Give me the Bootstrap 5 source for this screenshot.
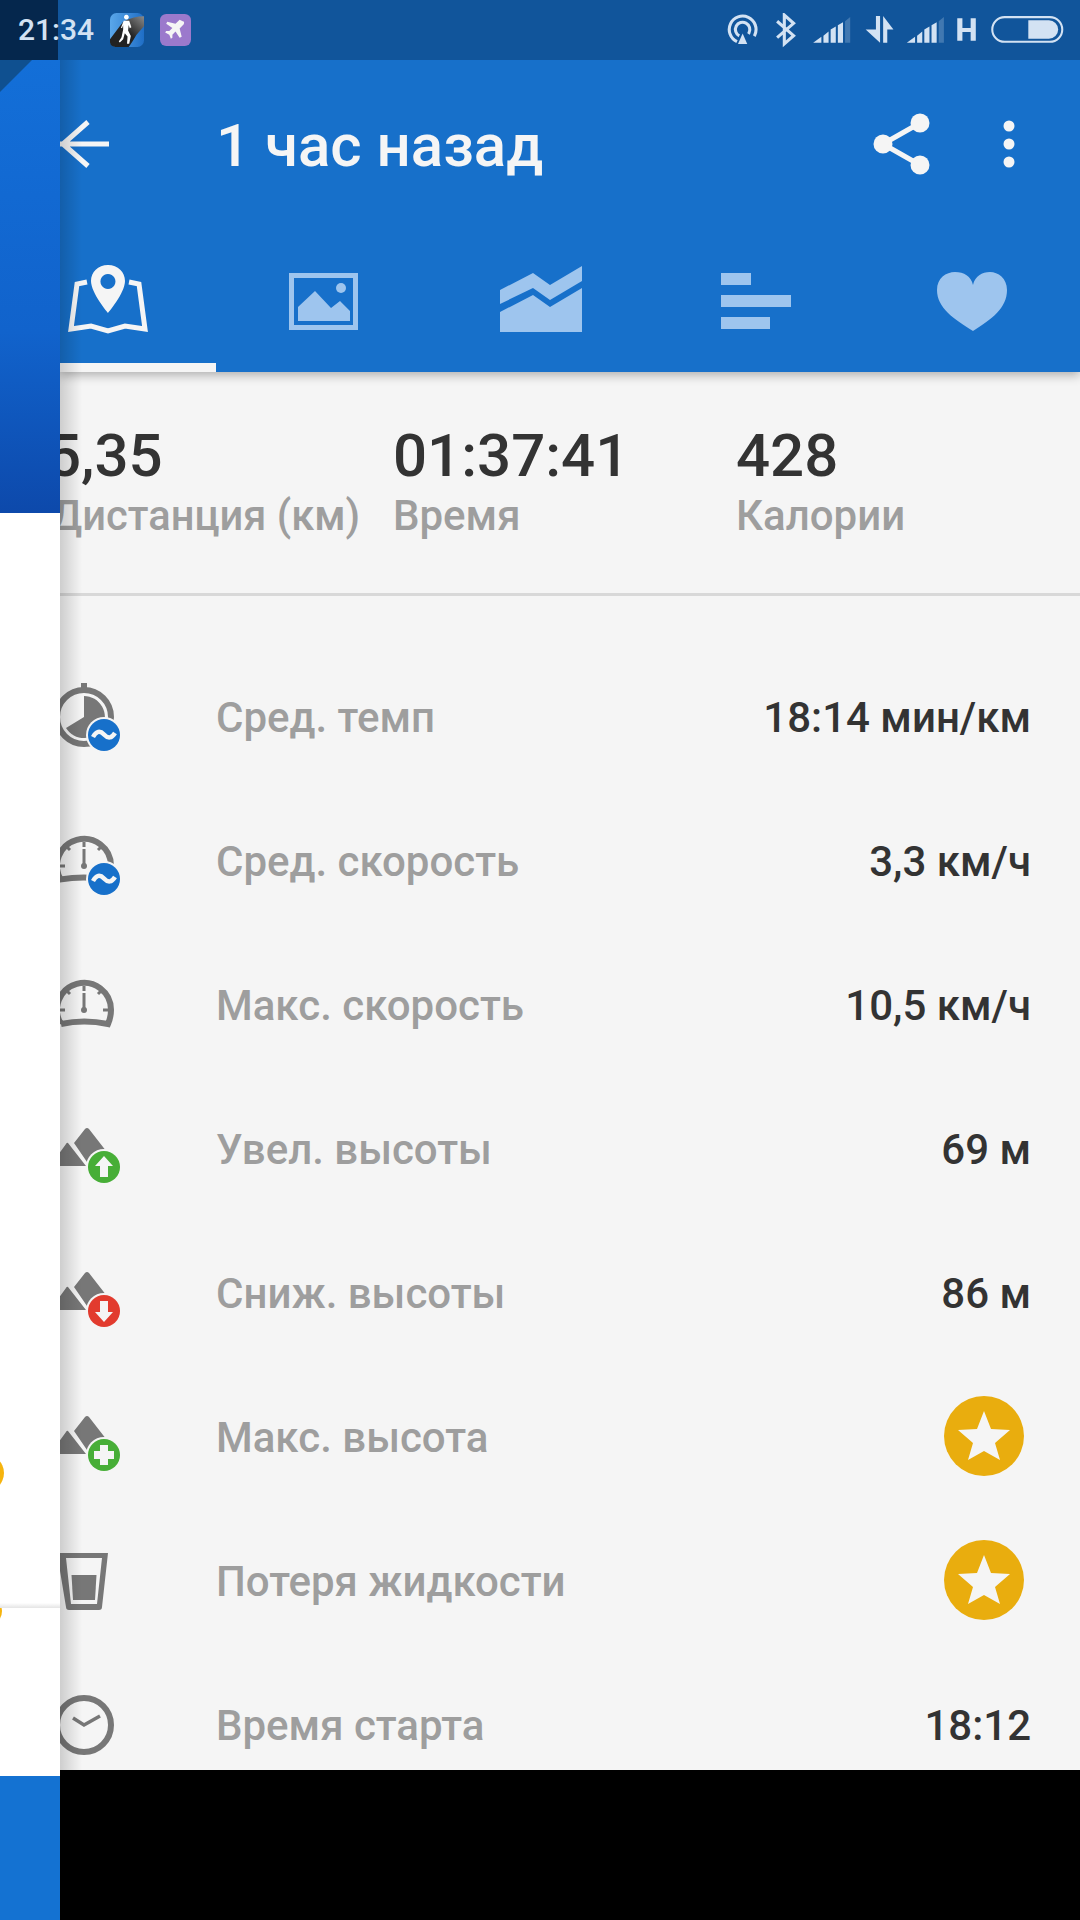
<!DOCTYPE html>
<html lang="ru">
<head>
    <meta charset="UTF-8">
    <meta name="viewport" content="width=device-width, initial-scale=1.0">
    <title>1 час назад</title>
    <link rel="stylesheet" href="https://cdn.jsdelivr.net/npm/bootstrap@5.3.0/dist/css/bootstrap.min.css">
    <script src="https://cdn.jsdelivr.net/npm/bootstrap@5.3.0/dist/js/bootstrap.bundle.min.js"></script>
    <style>
        html, body { background: #000; }
        body { width: 1080px; height: 1920px; overflow: hidden; font-family: Roboto, "Noto Sans", sans-serif; }
        svg { display: block; flex: none; }

        .status-bar { height: 60px; padding: 0 16px 0 18px; background: linear-gradient(90deg, #05274d 58px, #11559b 58px); color: #d3e2f3; }
        .status-time { width: 92px; font-size: 30px; font-weight: 500; line-height: 1; }

        .side-strip { width: 60px; height: 1860px; }
        .side-blue { height: 453px; background: linear-gradient(180deg, #136fd8 0%, #1163cc 60%, #0d49ab 100%); }
        .side-white { height: 1263px; background: #fff; }
        .side-blue-low { height: 144px; background: #1472d2; }
        .gold-edge { width: 45px; height: 40px; top: 940px; left: -41px; background: #f6b40e; }
        .gold-edge-low { width: 30px; height: 30px; top: 1083px; left: -28px; background: #f6b40e; }
        .side-line { top: 1543px; height: 5px; background: linear-gradient(180deg, #fff, #e4e4e4); }

        .main-panel { width: 1020px; height: 1710px; background: #f5f5f5; }
        .main-panel::after { content: ""; position: absolute; top: 0; bottom: 0; left: 0; width: 22px; background: linear-gradient(90deg, rgba(0,0,0,.16), rgba(0,0,0,0)); pointer-events: none; }

        .app-header { height: 312px; background: #1770ca; box-shadow: 0 3px 10px rgba(0,0,0,.3); }
        .tool-row { height: 168px; padding-right: 65px; }
        .tool-title { font-size: 60px; font-weight: 500; color: #f5f5f5; margin-left: 106px; margin-top: 4px; line-height: 1; }
        .menu-dots { margin-left: 72px; }
        .tab-row { height: 144px; margin-left: -60px; width: 1080px; }
        .tab-cell { height: 144px; }
        .tab-svg { margin-top: 33px; }
        .tab-mark { left: 60px; bottom: 0; width: 156px; height: 9px; background: #f5f5f5; }

        .stat-row { margin-left: -7px; height: 221px; padding-top: 48px; }
        .stat-box { width: 340px; }
        .stat-box:nth-child(2) { width: 343px; }
        .stat-value { font-size: 60px; font-weight: 500; line-height: 72px; color: #333; }
        .stat-shift { margin-left: -6px; }
        .stat-label { font-size: 42px; font-weight: 500; line-height: 48px; color: #9e9e9e; white-space: nowrap; }
        .stat-label-first { margin-left: -2px; font-size: 41.700px; }
        .stat-rule { height: 3px; background: #d8d8d8; }

        .info-list { padding-top: 50px; }
        .info-row { height: 144px; padding-right: 49px; }
        .info-icon { margin-left: -20px; margin-right: 88px; }
        .info-label { font-size: 42px; font-weight: 500; color: #9e9e9e; margin-bottom: 2px; }
        .info-value { font-size: 42px; font-weight: 500; color: #333; margin-bottom: 2px; }
        .star-mark { margin-right: 7px; margin-bottom: 4px; }
    </style>
</head>
<body>
    <!-- status bar -->
    <div class="status-bar d-flex align-items-center justify-content-between">
        <div class="d-flex align-items-center">
            <span class="status-time">21:34</span>
            <svg width="34" height="34" viewBox="0 0 31 31">
                <defs>
                    <linearGradient id="runBg" x1="0" y1="0" x2="1" y2="0"><stop offset="0" stop-color="#5aa7ea"/><stop offset="1" stop-color="#1f6ec6"/></linearGradient>
                    <linearGradient id="runBand" x1="0" y1="1" x2="1" y2="0"><stop offset=".5" stop-color="#222"/><stop offset="1" stop-color="#8a8a8a"/></linearGradient>
                </defs>
                <rect width="31" height="31" rx="6" fill="url(#runBg)"/>
                <path d="M0 24 L12 8 Q22 3 31 3 L31 12 L24 20 Q20 27 17 31 H5 Q1 31 0 27Z" fill="url(#runBand)"/>
                <path d="M15 1.500 a2.200 2.200 0 1 1 -.1 0Z M12.500 7 L17.500 7 L19.500 13 L18 14 L17 11 L16.500 16 L19 21 L17.500 28 L15.500 28 L16 21.500 L13.500 18.500 L12 24 L9 27 L8 26 L10.500 22 L12 15 L12 11 L11 14 L10 13.500Z" fill="#fff"/>
            </svg>
            <svg class="ms-3" width="31" height="34" viewBox="0 0 30 31">
                <rect width="30" height="31" rx="6" fill="#9b79cc"/>
                <path d="M22 7 q2 0 1 3 l-4 4 2 8 -2 1 -4 -6 -3 3 v3 l-1.500 1 -1.500 -4 -4 -2 1 -1.500 h3 l3 -3 -6 -4 1 -2 8 2 4 -4z" fill="#f5f5f5"/>
            </svg>
        </div>
        <div class="d-flex align-items-center">
            <svg width="337" height="35" viewBox="722 14 326 34" fill="#d3e2f3">
                <!-- hotspot -->
                <circle cx="736.500" cy="30" r="13" fill="none" stroke="#d3e2f3" stroke-width="3" stroke-dasharray="62 20" transform="rotate(115 736.500 30)"/>
                <circle cx="736.500" cy="30" r="7" fill="none" stroke="#d3e2f3" stroke-width="3" stroke-dasharray="34 10" transform="rotate(118 736.500 30)"/>
                <path d="M736.500 34 L741 44 H732Z"/>
                <!-- bluetooth -->
                <path d="M770 22 L786 36 L777 44 V16 L786 24 L770 38" fill="none" stroke="#d3e2f3" stroke-width="3"/>
                <!-- signal 1 -->
                <path d="M805 43 L813 37 V43Z M815 36 L820 32 V43 H815Z M822 30 L827 27 V43 H822Z M829 26 L834 23 V43 H829Z"/>
                <path d="M836 22 L841 18 V43 H836Z" opacity=".25"/>
                <!-- data arrows -->
                <path d="M866 17 H870 V43 L856 30 H866Z M873 43 V17 L883 30 H877 V43Z"/>
                <!-- signal 2 -->
                <path d="M896 43 L904 37 V43Z M906 36 L911 32 V43 H906Z M913 30 L918 27 V43 H913Z M920 26 L925 23 V43 H920Z"/>
                <path d="M927 22 L932 18 V43 H927Z" opacity=".25"/>
                <!-- H as network type -->
                <path d="M945 19 H950 V28.500 H958 V19 H963 V41 H958 V32.500 H950 V41 H945Z"/>
                <!-- battery -->
                <rect x="979" y="18" width="68" height="24" rx="12" fill="none" stroke="#d3e2f3" stroke-width="2"/>
                <path d="M1014 21 H1034 a9 9 0 0 1 0 18 H1014Z"/>
            </svg>
        </div>
    </div>

    <div class="d-flex align-items-start">
        <!-- window behind the panel -->
        <div class="side-strip position-relative overflow-hidden flex-shrink-0">
            <div class="side-blue position-relative">
                <svg class="position-absolute top-0 start-0" width="32" height="32" viewBox="0 0 32 32"><path d="M0 0 H32 L0 32Z" fill="#0f5090"/></svg>
            </div>
            <div class="side-white position-relative">
                <div class="gold-edge position-absolute rounded-circle"></div>
                <div class="gold-edge-low position-absolute rounded-circle"></div>
            </div>
            <div class="side-line position-absolute start-0 end-0"></div>
            <div class="side-blue-low"></div>
        </div>

        <div class="main-panel position-relative overflow-hidden">
            <div class="app-header position-relative">
                <div class="tool-row d-flex align-items-center justify-content-between">
                    <div class="d-flex align-items-center">
                        <svg width="50" height="50" viewBox="0 0 50 50" fill="none" stroke="#f5f5f5" stroke-width="5"><path d="M0 25 H49 M28 3 L3 25 L28 47"/></svg>
                        <span class="tool-title">1 час назад</span>
                    </div>
                    <div class="d-flex align-items-center">
                        <svg width="58" height="62" viewBox="0 0 58 62" fill="#f5f5f5"><circle cx="10" cy="31" r="9.500"/><circle cx="47" cy="10" r="9.500"/><circle cx="47" cy="52" r="9.500"/><path d="M10 31 L47 10 M10 31 L47 52" stroke="#f5f5f5" stroke-width="5"/></svg>
                        <svg class="menu-dots" width="12" height="48" viewBox="0 0 12 48" fill="#f5f5f5"><circle cx="6" cy="6" r="5.500"/><circle cx="6" cy="24" r="5.500"/><circle cx="6" cy="42" r="5.500"/></svg>
                    </div>
                </div>
                <div class="tab-row d-flex position-relative">
                    <div class="tab-cell d-flex flex-fill justify-content-center">
                        <svg class="tab-svg" width="96" height="76" viewBox="0 0 96 76" fill="none">
                            <path d="M48 4 C38 4 31 11 31 20 C31 32 48 52 48 52 C48 52 65 32 65 20 C65 11 58 4 48 4Z M48 13 a7.500 7.500 0 1 1 -.1 0Z" fill="#f5f5f5" fill-rule="evenodd"/>
                            <path d="M27 21 L17 23 L11 68 L31 65 L48 70 L65 65 L85 68 L79 23 L69 21" stroke="#f5f5f5" stroke-width="5"/>
                        </svg>
                    </div>
                    <div class="tab-cell d-flex flex-fill justify-content-center">
                        <svg class="tab-svg" width="96" height="76" viewBox="-6 0 96 76">
                            <rect x="9.500" y="14.500" width="64" height="52" fill="none" stroke="#9ec5ee" stroke-width="5"/>
                            <circle cx="59" cy="27" r="5" fill="#9ec5ee"/>
                            <path d="M16 60 V46 L33 30 L49 47 L58 40 L68 50 V60Z" fill="#9ec5ee"/>
                        </svg>
                    </div>
                    <div class="tab-cell d-flex flex-fill justify-content-center">
                        <svg class="tab-svg" width="96" height="76" viewBox="0 0 96 76" fill="#9ec5ee">
                            <path d="M0 24 L33 7 L50 19 L82 0 V15 L50 34 L33 22 L0 38Z M0 46 L33 29 L50 41 L82 22 V66 H0Z" transform="translate(8 5)"/>
                        </svg>
                    </div>
                    <div class="tab-cell d-flex flex-fill justify-content-center">
                        <svg class="tab-svg" width="96" height="76" viewBox="5 0 96 76" fill="#9ec5ee">
                            <rect x="18" y="12" width="30" height="12"/><rect x="18" y="34" width="70" height="12"/><rect x="18" y="56" width="49" height="12"/>
                        </svg>
                    </div>
                    <div class="tab-cell d-flex flex-fill justify-content-center">
                        <svg class="tab-svg" width="96" height="76" viewBox="0 0 96 76" fill="#9ec5ee">
                            <path d="M49 70 C30 58 13 47 13 29 C13 17 22 11 31 11 C40 11 47 15 49 24 C51 15 58 11 66 11 C74 11 83 17 83 29 C83 47 68 58 49 70Z"/>
                        </svg>
                    </div>
                    <div class="tab-mark position-absolute"></div>
                </div>
            </div>

            <div class="stat-row d-flex">
                <div class="stat-box"><div class="stat-value stat-shift">5,35</div><div class="stat-label stat-label-first">Дистанция (км)</div></div>
                <div class="stat-box"><div class="stat-value">01:37:41</div><div class="stat-label">Время</div></div>
                <div class="stat-box"><div class="stat-value">428</div><div class="stat-label">Калории</div></div>
            </div>
            <div class="stat-rule"></div>

            <div class="info-list">
                <div class="info-row d-flex align-items-center justify-content-between">
                    <div class="d-flex align-items-center">
                        <svg class="info-icon" width="88" height="88" viewBox="0 0 88 88">
                            <circle cx="44" cy="43" r="27" fill="none" stroke="#777" stroke-width="6"/>
                            <rect x="41" y="9" width="6" height="8" fill="#777"/>
                            <path d="M44 43 V22 A21 21 0 1 1 26 54Z" fill="#777"/>
                            <circle cx="64" cy="61" r="18" fill="#f5f5f5"/><circle cx="64" cy="61" r="16" fill="#1770ca"/>
                            <path d="M53 63 Q58 54 64 60.500 T75 59" fill="none" stroke="#f5f5f5" stroke-width="4.500"/>
                        </svg>
                        <span class="info-label">Сред. темп</span>
                    </div>
                    <span class="info-value">18:14 мин/км</span>
                </div>
                <div class="info-row d-flex align-items-center justify-content-between">
                    <div class="d-flex align-items-center">
                        <svg class="info-icon" width="88" height="88" viewBox="0 0 88 88">
                            <path d="M21 62 A27 27 0 1 1 71 48 M17 62 Q44 57 71 62" fill="none" stroke="#777" stroke-width="6"/>
                            <path d="M44 24 V29 M44 31 V48 M63 48 H68 M58 32 L61 29 M30 32 L27 29 M20 48 H25" stroke="#777" stroke-width="3"/>
                            <circle cx="44" cy="48" r="3" fill="#777"/>
                            <circle cx="64" cy="61" r="18" fill="#f5f5f5"/><circle cx="64" cy="61" r="16" fill="#1770ca"/>
                            <path d="M53 63 Q58 54 64 60.500 T75 59" fill="none" stroke="#f5f5f5" stroke-width="4.500"/>
                        </svg>
                        <span class="info-label">Сред. скорость</span>
                    </div>
                    <span class="info-value">3,3 км/ч</span>
                </div>
                <div class="info-row d-flex align-items-center justify-content-between">
                    <div class="d-flex align-items-center">
                        <svg class="info-icon" width="88" height="88" viewBox="0 0 88 88">
                            <path d="M21 62 A27 27 0 1 1 71 48 Q71 55 68 62 Q44 57 21 62" fill="none" stroke="#777" stroke-width="6"/>
                            <path d="M44 24 V29 M44 31 V48 M63 48 H68 M58 32 L61 29 M30 32 L27 29 M20 48 H25" stroke="#777" stroke-width="3"/>
                            <circle cx="44" cy="48" r="3" fill="#777"/>
                        </svg>
                        <span class="info-label">Макс. скорость</span>
                    </div>
                    <span class="info-value">10,5 км/ч</span>
                </div>
                <div class="info-row d-flex align-items-center justify-content-between">
                    <div class="d-flex align-items-center">
                        <svg class="info-icon" width="88" height="88" viewBox="0 0 88 88">
                            <path d="M34 37 L45 23 Q47 21 49 23 L70 50 L47 56Z M28 37 L46 60 H10 L26 38 Q27 36 28 37Z" fill="#777"/>
                            <circle cx="64" cy="61" r="18" fill="#f5f5f5"/><circle cx="64" cy="61" r="16" fill="#47ae37"/>
                            <path d="M64 50 L73 60 H68 V71 H60 V60 H55Z" fill="#f5f5f5"/>
                        </svg>
                        <span class="info-label">Увел. высоты</span>
                    </div>
                    <span class="info-value">69 м</span>
                </div>
                <div class="info-row d-flex align-items-center justify-content-between">
                    <div class="d-flex align-items-center">
                        <svg class="info-icon" width="88" height="88" viewBox="0 0 88 88">
                            <path d="M34 37 L45 23 Q47 21 49 23 L70 50 L47 56Z M28 37 L46 60 H10 L26 38 Q27 36 28 37Z" fill="#777"/>
                            <circle cx="64" cy="61" r="18" fill="#f5f5f5"/><circle cx="64" cy="61" r="16" fill="#e23b2e"/>
                            <path d="M64 72 L55 62 H60 V51 H68 V62 H73Z" fill="#f5f5f5"/>
                        </svg>
                        <span class="info-label">Сниж. высоты</span>
                    </div>
                    <span class="info-value">86 м</span>
                </div>
                <div class="info-row d-flex align-items-center justify-content-between">
                    <div class="d-flex align-items-center">
                        <svg class="info-icon" width="88" height="88" viewBox="0 0 88 88">
                            <path d="M34 37 L45 23 Q47 21 49 23 L70 50 L47 56Z M28 37 L46 60 H10 L26 38 Q27 36 28 37Z" fill="#777"/>
                            <circle cx="64" cy="61" r="18" fill="#f5f5f5"/><circle cx="64" cy="61" r="16" fill="#47ae37"/>
                            <path d="M60 51 H68 V57 H74 V65 H68 V71 H60 V65 H54 V57 H60Z" fill="#f5f5f5"/>
                        </svg>
                        <span class="info-label">Макс. высота</span>
                    </div>
                    <svg class="star-mark" width="80" height="80" viewBox="0 0 80 80">
                        <circle cx="40" cy="40" r="40" fill="#e9ad0e"/>
                        <path d="M40 15 L47 33 L66 34 L51 47 L56 64 L40 55 L24 64 L29 47 L14 34 L33 33Z" fill="#f5f5f5"/>
                    </svg>
                </div>
                <div class="info-row d-flex align-items-center justify-content-between">
                    <div class="d-flex align-items-center">
                        <svg class="info-icon" width="88" height="88" viewBox="0 0 88 88">
                            <path d="M17 15 H68 L62 69 Q62 72 59 72 H29 Q26 72 26 69Z M26 20 L31 66 H57 L62 20Z" fill="#777" fill-rule="evenodd"/>
                            <path d="M31.500 37 H56.500 L55 62 H33Z" fill="#777"/>
                        </svg>
                        <span class="info-label">Потеря жидкости</span>
                    </div>
                    <svg class="star-mark" width="80" height="80" viewBox="0 0 80 80">
                        <circle cx="40" cy="40" r="40" fill="#e9ad0e"/>
                        <path d="M40 15 L47 33 L66 34 L51 47 L56 64 L40 55 L24 64 L29 47 L14 34 L33 33Z" fill="#f5f5f5"/>
                    </svg>
                </div>
                <div class="info-row d-flex align-items-center justify-content-between">
                    <div class="d-flex align-items-center">
                        <svg class="info-icon" width="88" height="88" viewBox="0 0 88 88">
                            <circle cx="44" cy="43" r="27" fill="none" stroke="#777" stroke-width="6"/>
                            <path d="M33 36 L44 43 L60 34" fill="none" stroke="#777" stroke-width="3.500"/>
                        </svg>
                        <span class="info-label">Время старта</span>
                    </div>
                    <span class="info-value">18:12</span>
                </div>
            </div>
        </div>
    </div>
</body>
</html>
